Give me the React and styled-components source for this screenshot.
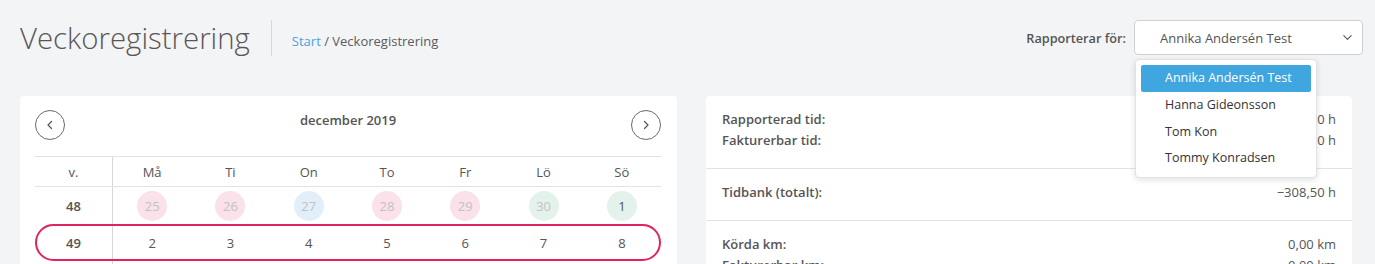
import React from "react";
import styled, { createGlobalStyle } from "styled-components";

const GlobalStyle = createGlobalStyle`
  html, body { margin: 0; padding: 0; background: #f3f4f6; }
  body { font-family: "Open Sans", "Liberation Sans", sans-serif; color: #555; }
  * { box-sizing: border-box; }
`;

const Page = styled.div`
  width: 1375px;
  height: 264px;
  overflow: hidden;
  position: relative;
`;

const Header = styled.header`
  display: flex;
  align-items: center;
  justify-content: space-between;
  padding: 20px 12px 0 20px;
  height: 55px;
`;

const TitleGroup = styled.div`
  display: flex;
  align-items: center;
  height: 35px;
`;

const Title = styled.h1`
  margin: 0;
  font-size: 29.4px;
  font-weight: 300;
  color: #5b5656;
  padding-right: 21px;
  border-right: 1px solid #d8d8da;
  line-height: 36px;
`;

const Breadcrumb = styled.div`
  font-size: 13px;
  color: #5b5b5b;
  padding-left: 20px;
  padding-top: 7px;
  a { color: #4aa3df; text-decoration: none; }
`;

const Reporter = styled.div`
  display: flex;
  align-items: center;
  gap: 8px;
  position: relative;
`;

const ReporterLabel = styled.span`
  font-size: 12.7px;
  font-weight: 600;
  color: #555;
`;

const Select = styled.div`
  width: 229px;
  height: 35px;
  border: 1px solid #cfd0d2;
  border-radius: 4px;
  background: #fff;
  display: flex;
  align-items: center;
  justify-content: space-between;
  padding: 0 9px 0 25px;
  font-size: 13px;
  color: #555;
`;

const Menu = styled.ul`
  position: absolute;
  top: 39px;
  right: 46px;
  width: 182px;
  margin: 0;
  padding: 5px;
  list-style: none;
  background: #fff;
  border: 1px solid #e2e2e4;
  border-radius: 4px;
  box-shadow: 0 2px 6px rgba(0, 0, 0, 0.12);
  z-index: 5;
`;

const MenuItem = styled.li`
  height: 26.8px;
  line-height: 26px;
  padding-left: 24px;
  font-size: 12.5px;
  border-radius: 2px;
  color: ${(p) => (p.$active ? "#fff" : "#333")};
  background: ${(p) => (p.$active ? "#3fa6df" : "transparent")};
`;

const Content = styled.main`
  display: grid;
  grid-template-columns: 657px 646px;
  gap: 29px;
  padding: 41px 0 0 20px;
`;

const Card = styled.section`
  background: #fff;
  border-radius: 4px;
  min-height: 200px;
`;

const CalendarCard = styled(Card)`
  padding: 14px 16px 0 15px;
`;

const CalHeader = styled.div`
  display: flex;
  justify-content: space-between;
  align-items: flex-start;
  height: 46px;
`;

const RoundButton = styled.button`
  width: 30px;
  height: 30px;
  border-radius: 50%;
  border: 1px solid #6a6a6a;
  background: #fff;
  display: flex;
  align-items: center;
  justify-content: center;
  padding: 0;
  color: #555;
`;

const MonthTitle = styled.div`
  font-size: 13px;
  font-weight: 600;
  color: #555;
  padding-top: 1px;
`;

const Row = styled.div`
  display: grid;
  grid-template-columns: 78px repeat(7, 1fr);
  height: ${(p) => (p.$head ? "31px" : "37px")};
  border-top: ${(p) => (p.$head ? "1px solid #e3e3e6" : "none")};
  border-bottom: ${(p) => (p.$head ? "1px solid #e3e3e6" : "none")};
  position: relative;
  ${(p) =>
    p.$selected &&
    `
    &::after {
      content: "";
      position: absolute;
      inset: 0;
      border: 2px solid #e0245e;
      border-radius: 19px;
      pointer-events: none;
    }
  `}
`;

const Cell = styled.div`
  display: flex;
  align-items: center;
  justify-content: center;
  font-size: 13px;
  font-weight: ${(p) => (p.$bold ? 600 : 400)};
  color: #555;
  border-right: ${(p) => (p.$week ? "1px solid #d6d6d9" : "none")};
`;

const Day = styled.span`
  width: 30px;
  height: 30px;
  border-radius: 50%;
  display: flex;
  align-items: center;
  justify-content: center;
  font-size: 13px;
  background: ${(p) => p.$bg || "transparent"};
  color: ${(p) => (p.$muted ? "#c2c2c2" : "#555")};
`;

const SummaryCard = styled(Card)`
  display: flex;
  flex-direction: column;
`;

const Section = styled.div`
  padding: 13px 16px 17px 16px;
  border-bottom: 1px solid #e3e3e6;
`;

const Line = styled.div`
  display: flex;
  justify-content: space-between;
  line-height: 21px;
  font-size: 13px;
`;

const Label = styled.span`
  font-weight: 600;
  color: #555;
`;

const Value = styled.span`
  color: #555;
`;

const Chevron = ({ dir = "down", size = 10 }) => {
  const d =
    dir === "down"
      ? "M2 4 L6 8 L10 4"
      : dir === "left"
      ? "M7.5 2.5 L4 6 L7.5 9.5"
      : "M4.5 2.5 L8 6 L4.5 9.5";
  return (
    <svg width={size} height={size} viewBox="0 0 12 12" fill="none">
      <path d={d} stroke="#555" strokeWidth="1.2" strokeLinecap="round" strokeLinejoin="round" />
    </svg>
  );
};

const days = ["Må", "Ti", "On", "To", "Fr", "Lö", "Sö"];
const PINK = "#fbe1e9";
const BLUE = "#e2effa";
const GREEN = "#e4f2ec";
const week48 = [
  { n: 25, bg: PINK, muted: true },
  { n: 26, bg: PINK, muted: true },
  { n: 27, bg: BLUE, muted: true },
  { n: 28, bg: PINK, muted: true },
  { n: 29, bg: PINK, muted: true },
  { n: 30, bg: GREEN, muted: true },
  { n: 1, bg: GREEN, muted: false },
];
const week49 = [2, 3, 4, 5, 6, 7, 8];
const people = ["Annika Andersén Test", "Hanna Gideonsson", "Tom Kon", "Tommy Konradsen"];

export default function App() {
  return (
    <Page>
      <GlobalStyle />
      <Header>
        <TitleGroup>
          <Title>Veckoregistrering</Title>
          <Breadcrumb>
            <a href="#">Start</a> / Veckoregistrering
          </Breadcrumb>
        </TitleGroup>
        <Reporter>
          <ReporterLabel>Rapporterar för:</ReporterLabel>
          <Select>
            <span>Annika Andersén Test</span>
            <Chevron dir="down" size={11} />
          </Select>
          <Menu>
            {people.map((p, i) => (
              <MenuItem key={p} $active={i === 0}>
                {p}
              </MenuItem>
            ))}
          </Menu>
        </Reporter>
      </Header>
      <Content>
        <CalendarCard>
          <CalHeader>
            <RoundButton aria-label="Föregående">
              <Chevron dir="left" size={12} />
            </RoundButton>
            <MonthTitle>december 2019</MonthTitle>
            <RoundButton aria-label="Nästa">
              <Chevron dir="right" size={12} />
            </RoundButton>
          </CalHeader>
          <Row $head>
            <Cell $week>v.</Cell>
            {days.map((d) => (
              <Cell key={d}>{d}</Cell>
            ))}
          </Row>
          <Row>
            <Cell $week $bold>48</Cell>
            {week48.map((d) => (
              <Cell key={d.n}>
                <Day $bg={d.bg} $muted={d.muted}>{d.n}</Day>
              </Cell>
            ))}
          </Row>
          <Row $selected>
            <Cell $week $bold>49</Cell>
            {week49.map((n) => (
              <Cell key={n}>
                <Day>{n}</Day>
              </Cell>
            ))}
          </Row>
          <Row>
            <Cell $week />
          </Row>
        </CalendarCard>
        <SummaryCard>
          <Section>
            <Line>
              <Label>Rapporterad tid:</Label>
              <Value>0,00 h</Value>
            </Line>
            <Line>
              <Label>Fakturerbar tid:</Label>
              <Value>0,00 h</Value>
            </Line>
          </Section>
          <Section>
            <Line>
              <Label>Tidbank (totalt):</Label>
              <Value>−308,50 h</Value>
            </Line>
          </Section>
          <Section>
            <Line>
              <Label>Körda km:</Label>
              <Value>0,00 km</Value>
            </Line>
            <Line>
              <Label>Fakturerbar km:</Label>
              <Value>0,00 km</Value>
            </Line>
          </Section>
        </SummaryCard>
      </Content>
    </Page>
  );
}
